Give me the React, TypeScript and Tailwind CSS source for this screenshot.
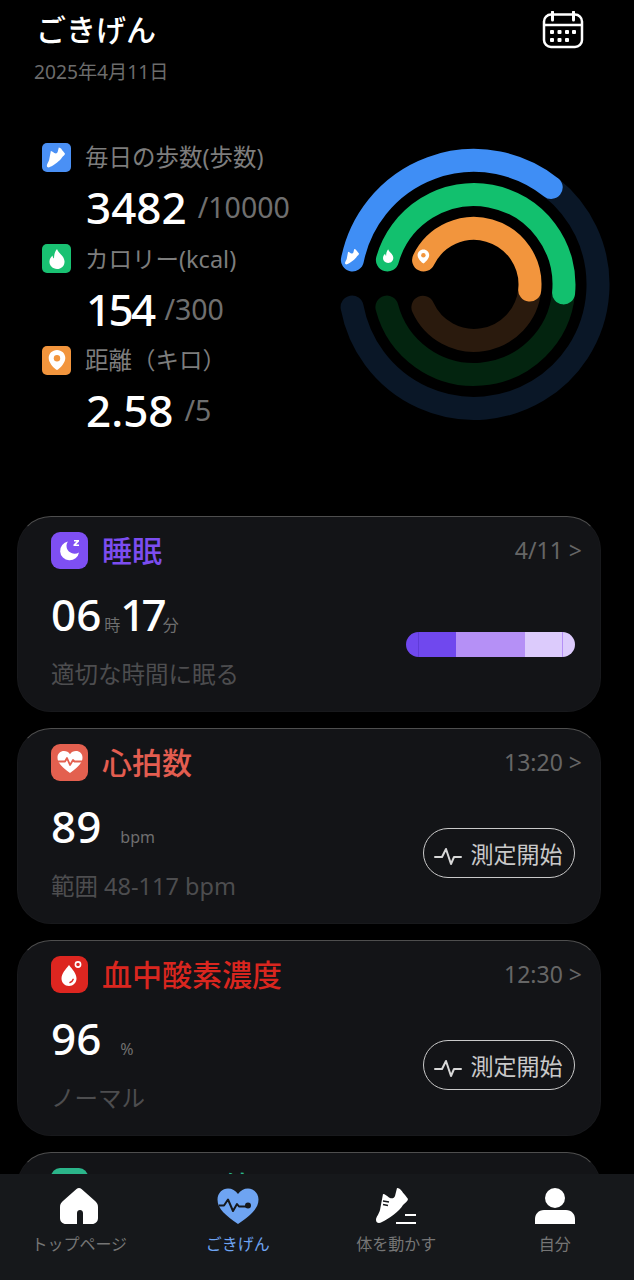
import { ReactNode } from "react";

const polar = (r: number, x: number, y: number) => {
  const len = Math.hypot(x, y);
  return `${(474 - 340 + (x / len) * r).toFixed(1)} ${(284.5 - 148 + (y / len) * r).toFixed(1)}`;
};

const rings = [
  { r: 124, color: "#3f8ef5", dark: "#0a1727", end: [76.7, -96.5], startX: -121.5, large: 1 },
  { r: 90, color: "#12c06e", dark: "#03240f", end: [88.7, 8.3], startX: -86.6, large: 0 },
  { r: 56, color: "#f2953d", dark: "#2a1a0d", end: [55, 5.5], startX: -50.4, large: 0 },
];

function Rings() {
  return (
    <svg width="270" height="274" viewBox="0 0 270 274" fill="none" className="shrink-0 mt-[57px]">
      {rings.map((g) => (
        <g key={g.r} strokeWidth="23" strokeLinecap="round">
          <path d={`M${polar(g.r, g.end[0], g.end[1])} A${g.r} ${g.r} 0 ${g.large} 1 ${polar(g.r, g.startX, 22.5)}`} stroke={g.dark} />
          <path d={`M${polar(g.r, g.startX, -24.5)} A${g.r} ${g.r} 0 0 1 ${polar(g.r, g.end[0], g.end[1])}`} stroke={g.color} />
        </g>
      ))}
      <g transform="translate(5 101) scale(0.44)"><Shoe fill="#fff" /></g>
      <g transform="translate(40 100) scale(0.68)"><Flame fill="#fff" /></g>
      <g transform="translate(75 100) scale(0.7)"><Pin fill="#fff" hole="#f2953d" /></g>
    </svg>
  );
}

function Shoe({ fill }: { fill: string }) {
  return <path d="M7 6c2 0 4 2 6 3.500 3 1.500 5 1 6-1.500l2-8c4 0 5 4 8 7l3 4c0 2-3 4-5 6C24 23 12 31 6 34c-3 2-6 1-6-2 0-3 3-6 4-10z" fill={fill} />;
}

function Flame({ fill }: { fill: string }) {
  return <path d="M12 2c1 4 7 6.500 7.500 12 .4 4.500-3 8-7.500 8s-8-3.500-7.500-8c.2-2.500 1.500-4 3-5.500.2 1.500.7 2.500 1.500 3 0-3.500.8-7 3-9.500z" fill={fill} />;
}

function Pin({ fill, hole }: { fill: string; hole: string }) {
  return (
    <>
      <path d="M12 2c-4.700 0-8.300 3.600-8.300 8.100 0 4.500 4.500 9.400 7.300 11.500.6.500 1.400.5 2 0 2.800-2.100 7.300-7 7.300-11.500C20.300 5.600 16.700 2 12 2z" fill={fill} />
      <circle cx="12" cy="10.300" r="3.200" fill={hole} />
    </>
  );
}

function Tile({ color, size, radius, children }: { color: string; size: string; radius: string; children: ReactNode }) {
  return (
    <div className={`flex items-center justify-center ${size} ${radius}`} style={{ backgroundColor: color }}>
      {children}
    </div>
  );
}

function Stat({ tile, label, value, goal, valueClass }: { tile: ReactNode; label: string; value: string; goal: string; valueClass?: string }) {
  return (
    <div className="h-[101.5px]">
      <div className="flex items-center h-[30px]">
        {tile}
        <span className="ml-[14px] text-[23.5px] leading-[30px] text-[#7d7d7d]">{label}</span>
      </div>
      <div className="flex items-center ml-[44px] mt-[5px]">
        <span className={`text-[44px] leading-[60px] font-medium text-white ${valueClass ?? ""}`}>{value}</span>
        <span className="ml-[11px] text-[28.5px] leading-[40px] text-[#6f6f6f]">{goal}</span>
      </div>
    </div>
  );
}

function MeasureButton() {
  return (
    <div className="flex items-center justify-center gap-[9px] w-[152px] h-[50px] pr-[2px] rounded-full border border-[#c9c9c9] text-[23px] text-[#c9c9c9]">
      <svg width="28" height="22" viewBox="0 0 28 22" fill="none" stroke="#d8d8d8" strokeWidth="2" strokeLinejoin="round" strokeLinecap="round" className="mt-[5px]">
        <path d="M1 12h7l4-8 5 15 3-7h7" />
      </svg>
      <span className="mt-[2px]">測定開始</span>
    </div>
  );
}

function Card({ icon, title, titleClass, right, children }: { icon: ReactNode; title: string; titleClass: string; right?: string; children?: ReactNode }) {
  return (
    <div className="h-[196px] shrink-0 rounded-[34px] bg-[#131417] border border-[#18191c] border-t-[#4e4e4e] pl-[33px] pr-[18px] pt-[14px]">
      <div className="flex items-center h-[38px]">
        {icon}
        <span className={`ml-[14px] text-[30px] font-medium ${titleClass}`}>{title}</span>
        {right && <span className="ml-auto text-[23px] text-[#666]">{right}&nbsp;&gt;</span>}
      </div>
      {children}
    </div>
  );
}

function Metric({ value, unit, note, gap }: { value: string; unit: string; note: string; gap: string }) {
  return (
    <div className="flex items-end justify-between pr-[7px] mt-[15px]">
      <div>
        <div className="flex items-baseline h-[60px]">
          <span className="text-[44px] leading-[60px] font-medium text-white">{value}</span>
          <span className={`text-[16px] text-[#6f6f6f] ${gap}`}>{unit}</span>
        </div>
        <div className="mt-[15px] text-[23.5px] leading-[30px] text-[#4d4d4f]">{note}</div>
      </div>
      <div className="mb-[23px]"><MeasureButton /></div>
    </div>
  );
}

function Tab({ label, active, children }: { label: string; active?: boolean; children: ReactNode }) {
  return (
    <div className="flex flex-col items-center">
      <div className="flex items-center justify-center h-[40px] mt-[12px]">{children}</div>
      <span className={`mt-[7px] text-[16px] leading-[22px] ${active ? "text-[#6ea4f2]" : "text-[#757575]"}`}>{label}</span>
    </div>
  );
}

export default function App() {
  return (
    <div className="relative w-[634px] h-[1280px] overflow-hidden bg-black font-['Noto_Sans','Noto_Sans_CJK_JP',sans-serif]">
      <div className="flex justify-between pl-[36px] pr-[50px] pt-[9px]">
        <h1 className="text-[30px] leading-[42px] font-medium text-white">ごきげん</h1>
        <svg width="44" height="40" viewBox="0 0 44 40" fill="none" className="mt-[2px]">
          <rect x="4" y="3.500" width="38" height="32.500" rx="7" stroke="#fff" strokeWidth="2.500" />
          <path d="M4 14h38" stroke="#fff" strokeWidth="2.500" />
          <path d="M12.500 1v8M33.500 1v8" stroke="#fff" strokeWidth="3" strokeLinecap="round" />
          <g fill="#fff">
            <rect x="10" y="19" width="4" height="4" rx="1" />
            <rect x="17.500" y="19" width="4" height="4" rx="1" />
            <rect x="25" y="19" width="4" height="4" rx="1" />
            <rect x="32" y="19" width="4" height="4" rx="1" />
            <rect x="10" y="27" width="4" height="4" rx="1" />
            <rect x="17.500" y="27" width="4" height="4" rx="1" />
            <rect x="25" y="27" width="4" height="4" rx="1" />
          </g>
        </svg>
      </div>
      <p className="ml-[34px] mt-[7px] text-[19.2px] leading-[28px] text-[#6c6c6c]">2025年4月11日</p>

      <div className="flex justify-between pl-[42px] pr-[24px] mt-[5px]">
        <div className="h-[356px] pt-[51px]">
          <Stat
            label="毎日の歩数(歩数)"
            value="3482"
            goal="/10000"
            tile={<Tile color="#4a90f5" size="w-[29px] h-[29px]" radius="rounded-[5px]"><svg width="21" height="21" viewBox="-1 -1 36 37"><Shoe fill="#fff" /></svg></Tile>}
          />
          <Stat
            label="カロリー(kcal)"
            value="154"
            goal="/300"
            valueClass="tracking-[-2.7px]"
            tile={<Tile color="#19c172" size="w-[29px] h-[29px]" radius="rounded-[5px]"><svg width="24" height="24" viewBox="0 0 24 24"><Flame fill="#fff" /></svg></Tile>}
          />
          <Stat
            label="距離（キロ）"
            value="2.58"
            goal="/5"
            tile={<Tile color="#f2953d" size="w-[29px] h-[29px]" radius="rounded-[5px]"><svg width="24" height="24" viewBox="0 0 24 24"><Pin fill="#fff" hole="#f2953d" /></svg></Tile>}
          />
        </div>
        <Rings />
      </div>

      <div className="flex flex-col gap-[16px] w-[584px] ml-[17px] mt-[69px]">
        <Card
          title="睡眠"
          titleClass="text-[#7c4df0]"
          right="4/11"
          icon={
            <Tile color="#7e4ff3" size="w-[37px] h-[37px]" radius="rounded-[9px]">
              <svg width="26" height="26" viewBox="0 0 26 26" fill="#fff">
                <path d="M11 4.500a9.500 9.500 0 1 0 11 11c-1.300.8-2.700 1.200-4.300 1.200-4.500 0-8.200-3.400-8.200-7.900 0-1.600.5-3 1.500-4.300z" />
                <path d="M17 3h5v1.500l-3 3h3V9h-5.500V7.500l3-3H17z" />
              </svg>
            </Tile>
          }
        >
          <div className="flex items-end justify-between pr-[7px] mt-[15px]">
            <div>
              <div className="flex items-baseline h-[60px]">
                <span className="text-[44px] leading-[60px] font-medium text-white">06</span>
                <span className="ml-[3px] text-[16px] text-[#6f6f6f]">時</span>
                <span className="text-[44px] leading-[60px] font-medium text-white tracking-[-4px]">17</span>
                <span className="text-[16px] text-[#6f6f6f]">分</span>
              </div>
              <div className="mt-[15px] text-[23.5px] leading-[30px] text-[#4d4d4f]">適切な時間に眠る</div>
            </div>
            <div className="relative flex w-[169px] h-[25px] mb-[32px] rounded-full overflow-hidden">
              <div className="w-[50px] bg-[#7048ee]" />
              <div className="w-[69px] bg-[#b590f6]" />
              <div className="w-[50px] bg-[#dccbfc]" />
              <div className="absolute left-[12px] top-0 w-px h-full bg-[#5f3bd6]" />
              <div className="absolute left-[156px] top-0 w-px h-full bg-[#b590f6]" />
            </div>
          </div>
        </Card>

        <Card
          title="心拍数"
          titleClass="text-[#e35d50]"
          right="13:20"
          icon={
            <Tile color="#e3604f" size="w-[37px] h-[37px]" radius="rounded-[9px]">
              <svg width="30" height="28" viewBox="0 0 30 28" fill="none">
                <path d="M15 25C8 20 2.500 15.500 2.500 9.500 2.500 5.500 5.500 3 9 3c2.500 0 4.700 1.200 6 3.200C16.300 4.200 18.500 3 21 3c3.500 0 6.500 2.500 6.500 6.500C27.500 15.500 22 20 15 25z" fill="#fff" />
                <path d="M1 13.500h9l2-3.500 3 7 3-5 1.500 1.500H29" stroke="#e3604f" strokeWidth="1.800" strokeLinejoin="round" />
              </svg>
            </Tile>
          }
        >
          <Metric value="89" unit="bpm" note="範囲 48-117 bpm" gap="ml-[19px]" />
        </Card>

        <Card
          title="血中酸素濃度"
          titleClass="text-[#d9261f]"
          right="12:30"
          icon={
            <Tile color="#dd2620" size="w-[37px] h-[37px]" radius="rounded-[9px]">
              <svg width="28" height="30" viewBox="0 0 28 30" fill="none">
                <path d="M13 6c3.500 4.500 7.500 8.500 7.500 13.500 0 4.200-3.300 7.500-7.500 7.500s-7.500-3.300-7.500-7.500C5.500 14.500 9.500 10.500 13 6z" fill="#fff" />
                <circle cx="22" cy="5.500" r="2.600" stroke="#fff" strokeWidth="1.600" />
                <path d="M14 23.500c1.500-.5 2.700-1.600 3.200-3.200" stroke="#dd2620" strokeWidth="1.400" strokeLinecap="round" />
              </svg>
            </Tile>
          }
        >
          <Metric value="96" unit="%" note="ノーマル" gap="ml-[19px]" />
        </Card>

        <Card
          title="ストレス値"
          titleClass="text-[#2bb58a]"
          icon={<Tile color="#2bb58a" size="w-[37px] h-[37px]" radius="rounded-[9px]"><span /></Tile>}
        />
      </div>

      <nav className="absolute bottom-0 left-0 right-0 grid grid-cols-4 h-[106px] bg-[#16181b]">
        <Tab label="トップページ">
          <svg width="38" height="36" viewBox="0 0 38 36" fill="#fff">
            <path fillRule="evenodd" d="M16.500 1c1.500-1.300 3.500-1.300 5 0l13 11.500c2.300 2 3.500 3.500 3.500 6.500v11c0 3.500-2.500 6-6 6h-9V25c0-1.700-1.300-3-3-3s-3 1.300-3 3v11H6c-3.500 0-6-2.500-6-6V19c0-3 1.200-4.500 3.500-6.500z" />
          </svg>
        </Tab>
        <Tab label="ごきげん" active>
          <svg width="44" height="38" viewBox="0 0 44 38" fill="none">
            <path d="M22 37C10 28.500 1.500 22 1.500 12.500 1.500 6 6.500 1.500 12 1.500c4 0 7.700 2 10 5.500 2.300-3.500 6-5.500 10-5.500 5.500 0 10.500 4.500 10.500 11C42.500 22 34 28.500 22 37z" fill="#6ea4f2" />
            <path d="M3 18.500h5l4-6 5 11.500 4-7 2 2.500h11" stroke="#16181b" strokeWidth="2" strokeLinejoin="round" />
            <circle cx="32" cy="18.500" r="3" fill="#16181b" />
          </svg>
        </Tab>
        <Tab label="体を動かす">
          <svg width="41" height="36" viewBox="0 0 41 36" fill="#fff">
            <Shoe fill="#fff" />
            <path d="M7 13l6 1M7 16.500l5 1" stroke="#16181b" strokeWidth="1.400" />
            <path d="M20 35h20M29 27h11" stroke="#fff" strokeWidth="2" />
          </svg>
        </Tab>
        <Tab label="自分">
          <svg width="40" height="36" viewBox="0 0 40 36" fill="#fff">
            <circle cx="20" cy="10" r="10" />
            <path d="M0 36v-5c0-5 3.500-9 9-9h22c5.500 0 9 4 9 9v5z" />
          </svg>
        </Tab>
      </nav>
    </div>
  );
}
